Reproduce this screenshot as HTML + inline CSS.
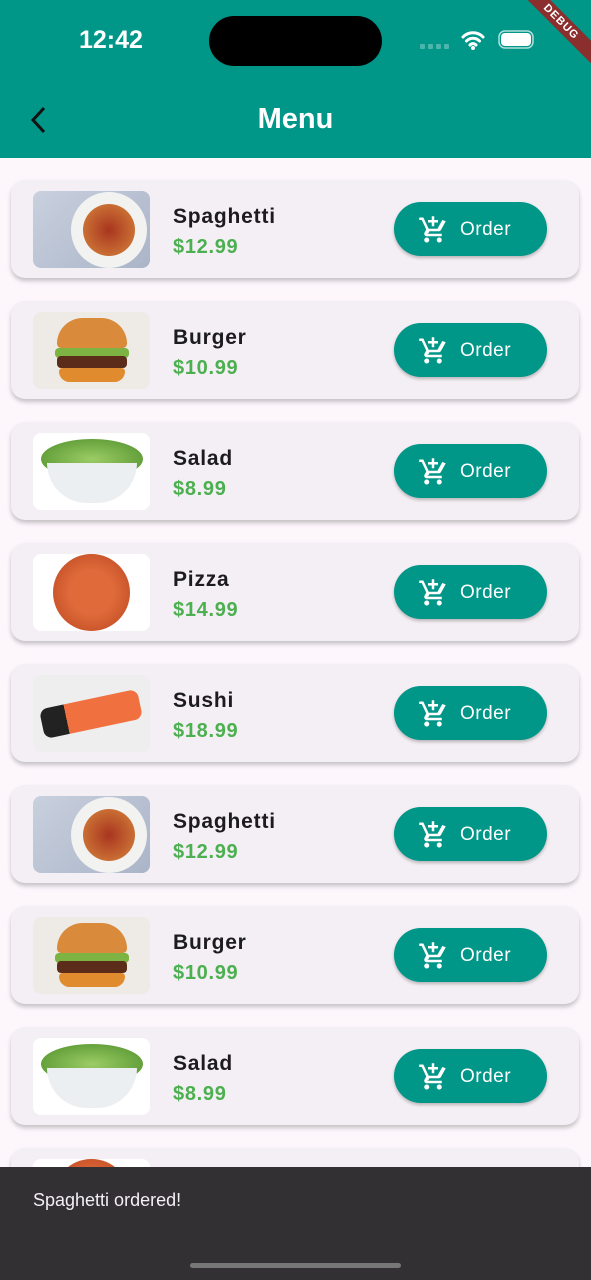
<!DOCTYPE html>
<html><head><style>
*{margin:0;padding:0;box-sizing:border-box}
body{width:591px;height:1280px;overflow:hidden;background:#fdf7fc;font-family:"Liberation Sans",sans-serif;position:relative}
.top{position:absolute;left:0;top:0;width:591px;height:158px;background:#009688}
.time{position:absolute;left:79px;top:26px;color:#fff;font-size:25px;font-weight:bold}
.island{position:absolute;left:209px;top:16px;width:173px;height:50px;background:#000;border-radius:25px}
.title{position:absolute;left:0;width:591px;text-align:center;top:103px;color:#fff;font-size:29px;font-weight:bold}
.debug{position:absolute;right:-30px;top:14px;width:120px;transform:rotate(45deg);background:#8b2e2e;color:#fff;font-size:11px;font-weight:bold;text-align:center;letter-spacing:1px;line-height:16px}
.card{position:absolute;left:11px;width:568px;height:98px;background:#f4eff4;border-radius:14px;box-shadow:0 3px 4px rgba(0,0,0,.22)}
.img{position:absolute;left:22px;top:11px;width:117px;height:77px;border-radius:8px;overflow:hidden}
.name{position:absolute;left:162px;top:25px;font-size:21px;font-weight:bold;color:#1c1b1f;letter-spacing:.8px}
.price{position:absolute;left:162px;top:56px;font-size:20px;font-weight:bold;color:#4caf50;letter-spacing:.7px}
.btn{position:absolute;left:383px;top:22px;width:153px;height:54px;border-radius:27px;background:#009688;box-shadow:0 2px 3px rgba(0,0,0,.25);color:#fff;font-size:19px;letter-spacing:.5px}
.btn span{position:absolute;left:66px;top:17px}
.btn svg{position:absolute;left:24px;top:13px}
.snack{position:absolute;left:0;top:1167px;width:591px;height:113px;background:#323033}
.snack div{position:absolute;left:33px;top:23px;color:#f3eff4;font-size:18px}
.home{position:absolute;left:190px;top:1263px;width:211px;height:5px;border-radius:3px;background:#777}
</style></head><body>
<div class="top"></div>
<div class="time">12:42</div>
<div class="island"></div>
<svg style="position:absolute;left:418px;top:28px" width="130" height="24"><g fill="#4db6ac"><rect x="2" y="16" width="5" height="5" rx="1"/><rect x="10" y="16" width="5" height="5" rx="1"/><rect x="18" y="16" width="5" height="5" rx="1"/><rect x="26" y="16" width="5" height="5" rx="1"/></g><path d="M45 9a14 14 0 0 1 20 0M48.5 13a9 9 0 0 1 13 0M52 17a4 4 0 0 1 6 0" stroke="#fff" stroke-width="3" fill="none" stroke-linecap="round"/><circle cx="55" cy="20" r="2" fill="#fff"/><rect x="81" y="3" width="34" height="17" rx="6" fill="none" stroke="#b2dfdb" stroke-width="1.5"/><rect x="83" y="5" width="30" height="13" rx="4" fill="#fff"/></svg>
<div class="debug">DEBUG</div>
<svg style="position:absolute;left:28px;top:105px" width="20" height="30"><path d="M16 3L5 15l11 12" stroke="#111" stroke-width="3" fill="none"/></svg>
<div class="title">Menu</div>

<div id="list"></div>
<script>
const items=[["Spaghetti","$12.99",0],["Burger","$10.99",1],["Salad","$8.99",2],["Pizza","$14.99",3],["Sushi","$18.99",4],["Spaghetti","$12.99",0],["Burger","$10.99",1],["Salad","$8.99",2],["Pizza","$14.99",3]];
const imgs=[
'<div style="width:100%;height:100%;background:linear-gradient(135deg,#c9d0de,#aab5c8)"><div style="position:absolute;left:38px;top:1px;width:76px;height:76px;border-radius:50%;background:#f2f2f0"></div><div style="position:absolute;left:50px;top:13px;width:52px;height:52px;border-radius:50%;background:radial-gradient(#a8351f,#d8873d)"></div></div>',
'<div style="width:100%;height:100%;background:#eeebe6"><div style="position:absolute;left:24px;top:6px;width:70px;height:30px;border-radius:35px 35px 6px 6px;background:#d98a3a"></div><div style="position:absolute;left:22px;top:36px;width:74px;height:10px;background:#7cb342;border-radius:4px"></div><div style="position:absolute;left:24px;top:44px;width:70px;height:12px;background:#5b2c1a;border-radius:4px"></div><div style="position:absolute;left:26px;top:56px;width:66px;height:14px;background:#e08c2e;border-radius:4px 4px 12px 12px"></div></div>',
'<div style="width:100%;height:100%;background:#fff"><div style="position:absolute;left:8px;top:6px;width:102px;height:40px;border-radius:50%;background:radial-gradient(#9ccc65,#4e8f2a)"></div><div style="position:absolute;left:14px;top:30px;width:90px;height:40px;border-radius:0 0 45px 45px;background:#eceff1"></div></div>',
'<div style="width:100%;height:100%;background:#fff"><div style="position:absolute;left:20px;top:0;width:77px;height:77px;border-radius:50%;background:radial-gradient(#e06a3a 40%,#c8542a 75%,#d99a5a 80%)"></div></div>',
'<div style="width:100%;height:100%;background:#eee"><div style="position:absolute;left:8px;top:24px;width:100px;height:30px;border-radius:8px;background:linear-gradient(90deg,#222 0 25%,#f07040 25% 100%);transform:rotate(-12deg)"></div></div>'];
let h='';
items.forEach((it,i)=>{const t=180+i*121;
h+=`<div class="card" style="top:${t}px"><div class="img">${imgs[it[2]]}</div><div class="name">${it[0]}</div><div class="price">${it[1]}</div><div class="btn"><svg width="30" height="30" viewBox="0 0 24 24"><path d="M11 9h2V6h3V4h-3V1h-2v3H8v2h3v3zm-4 9c-1.1 0-2 .9-2 2s.9 2 2 2 2-.9 2-2-.9-2-2-2zm10 0c-1.1 0-2 .9-2 2s.9 2 2 2 2-.9 2-2-.9-2-2-2zm-8.8-3.2l.03-.12.9-1.68h7.45c.75 0 1.410-.41 1.75-1.03l3.86-7.01L19.420 4l-3.87 7H8.53L4.27 2H1v2h2l3.6 7.59-1.35 2.45c-.16.28-.25.61-.25.96 0 1.1.9 2 2 2h12v-2H7.42c-.13 0-.25-.11-.25-.25z" fill="#fff"/></svg><span>Order</span></div></div>`;});
document.getElementById('list').innerHTML=h;
</script>
<div class="snack"><div>Spaghetti ordered!</div></div>
<div class="home"></div>
</body></html>
